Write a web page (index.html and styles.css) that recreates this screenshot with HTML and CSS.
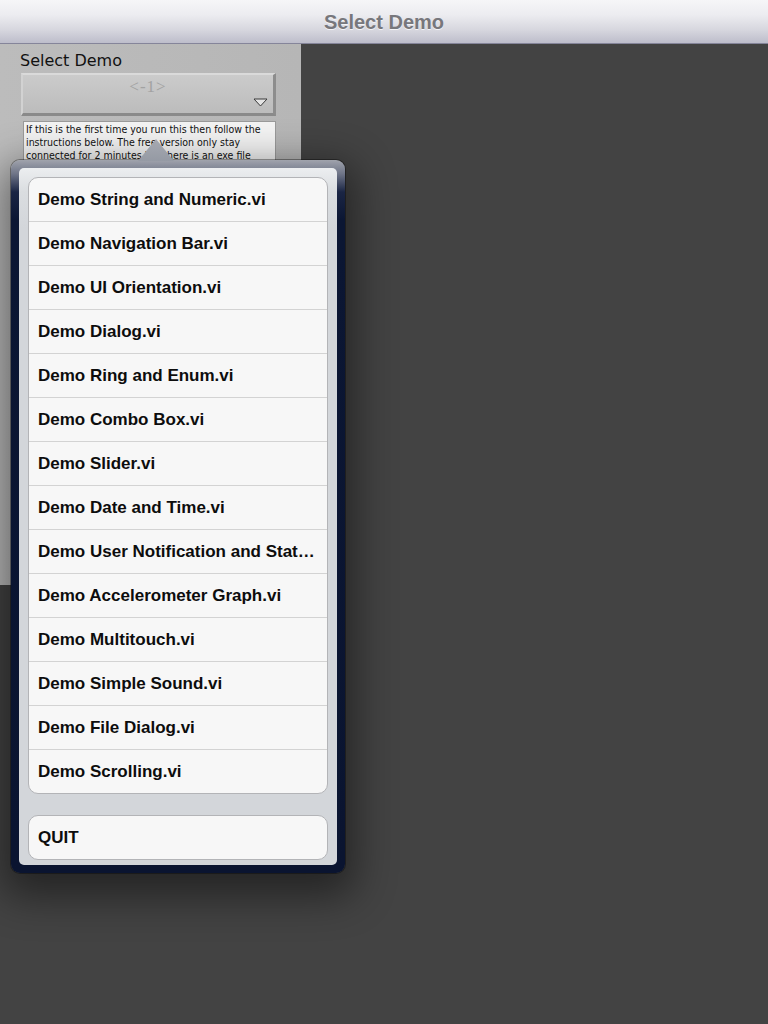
FILE: index.html
```html
<!DOCTYPE html>
<html>
<head>
<meta charset="utf-8">
<title>Select Demo</title>
<link rel="stylesheet" href="styles.css">
</head>
<body>
<header class="navbar"><h1 class="nav-title">Select Demo</h1></header>
<main class="stage">
  <section class="panel">
    <div class="panel-label">Select Demo</div>
    <div class="combo">
      <span class="combo-value">&lt;-1&gt;</span>
      <svg class="combo-arrow" width="15" height="9" viewBox="0 0 15 9"><path d="M1 1 L14 1 L7.5 8 Z" fill="#e4e4e4" stroke="#3a3a3a" stroke-width="1"/></svg>
    </div>
    <div class="notes">If this is the first time you run this then follow the instructions below. The free version only stay connected for 2 minutes but there is an exe file that you can run on your computer to get the full version working.</div>
  </section>

  <div class="popover">
    <div class="popover-arrow"></div>
    <div class="popover-inner">
      <ul class="group list">
        <li class="row">Demo String and Numeric.vi</li>
        <li class="row">Demo Navigation Bar.vi</li>
        <li class="row">Demo UI Orientation.vi</li>
        <li class="row">Demo Dialog.vi</li>
        <li class="row">Demo Ring and Enum.vi</li>
        <li class="row">Demo Combo Box.vi</li>
        <li class="row">Demo Slider.vi</li>
        <li class="row">Demo Date and Time.vi</li>
        <li class="row">Demo User Notification and Stat…</li>
        <li class="row">Demo Accelerometer Graph.vi</li>
        <li class="row">Demo Multitouch.vi</li>
        <li class="row">Demo Simple Sound.vi</li>
        <li class="row">Demo File Dialog.vi</li>
        <li class="row">Demo Scrolling.vi</li>
      </ul>
      <ul class="group quit">
        <li class="row">QUIT</li>
      </ul>
    </div>
  </div>
</main>
</body>
</html>
```

FILE: styles.css
```css
* { box-sizing: border-box; }

html, body {
  margin: 0;
  padding: 0;
  width: 768px;
  height: 1024px;
  overflow: hidden;
  background: #434343;
  font-family: "Liberation Sans", Arial, sans-serif;
}

.navbar {
  height: 44px;
  border-bottom: 1px solid #85859a;
  background: linear-gradient(#f6f6f8 0%, #ececf0 35%, #d6d6de 70%, #bdbdcb 100%);
  display: flex;
  align-items: center;
  justify-content: center;
}

.nav-title {
  margin: 0;
  font-size: 20px;
  font-weight: bold;
  color: #77777c;
  text-shadow: 0 1px 0 rgba(255,255,255,0.7);
  padding-top: 1px;
}

.stage {
  position: relative;
  height: 980px;
}

.panel {
  width: 301px;
  height: 541px;
  background: linear-gradient(90deg, #bcbcbc 0%, #b6b6b6 100%);
  padding: 7px 0 0 20px;
  display: flex;
  flex-direction: column;
  align-items: flex-start;
}

.panel-label {
  font-family: "DejaVu Sans", sans-serif;
  font-size: 16px;
  line-height: 20px;
  color: #111;
}

.combo {
  position: relative;
  margin: 2px 0 0 1px;
  width: 255px;
  height: 43px;
  background: linear-gradient(#cbcbcb, #bcbcbc);
  border-top: 2px solid #dadada;
  border-left: 2px solid #d2d2d2;
  border-right: 3px solid #8d8d8d;
  border-bottom: 3px solid #8a8a8a;
  display: flex;
  justify-content: center;
}

.combo-value {
  font-family: "Liberation Serif", serif;
  font-size: 17px;
  color: #a2a2a2;
  margin-top: 2px;
  letter-spacing: 1px;
}

.combo-arrow {
  position: absolute;
  right: 5px;
  bottom: 6px;
}

.notes {
  margin: 5px 0 0 3px;
  width: 253px;
  height: 230px;
  background: #f3f3f3;
  border: 1px solid #9a9a9a;
  padding: 1px 10px 1px 2px;
  font-family: "DejaVu Sans Condensed", "DejaVu Sans", sans-serif;
  font-size: 10.5px;
  line-height: 13px;
  color: #111;
  overflow: hidden;
}

.popover {
  position: absolute;
  left: 11px;
  top: 116px;
  width: 334px;
  height: 713px;
  border-radius: 9px;
  padding: 8px;
  background: linear-gradient(#a0a3ac 0px, #6e7487 14px, #1a2544 32px, #0b1633 60px, #0a1430 100%);
  box-shadow: 0 0 0 1px rgba(0,0,0,0.35), 0 14px 40px 10px rgba(0,0,0,0.45);
}

.popover-arrow {
  position: absolute;
  left: 127px;
  top: -21px;
  width: 36px;
  height: 22px;
  background: linear-gradient(#a6a9b1, #959aa4);
  clip-path: polygon(50% 0, 100% 100%, 0 100%);
}

.popover-inner {
  height: 100%;
  border-radius: 5px;
  background: linear-gradient(#eceef0 0px, #dadde0 24px, #d3d6da 60px, #d3d6da 100%);
  padding: 9px 9px 5px 9px;
  display: flex;
  flex-direction: column;
}

.group {
  list-style: none;
  margin: 0;
  padding: 0;
  flex-shrink: 0;
  background: #f7f7f7;
  border: 1px solid #b3b4b7;
  border-radius: 10px;
  overflow: hidden;
}

.quit {
  margin-top: 21px;
}

.row {
  height: 44px;
  border-top: 1px solid #d3d3d3;
  padding: 0 10px 0 9px;
  display: flex;
  align-items: center;
  font-size: 17px;
  font-weight: bold;
  color: #0d0d0d;
  white-space: nowrap;
  overflow: hidden;
  text-overflow: ellipsis;
}

.row:first-child {
  border-top: none;
  height: 43px;
}
```
